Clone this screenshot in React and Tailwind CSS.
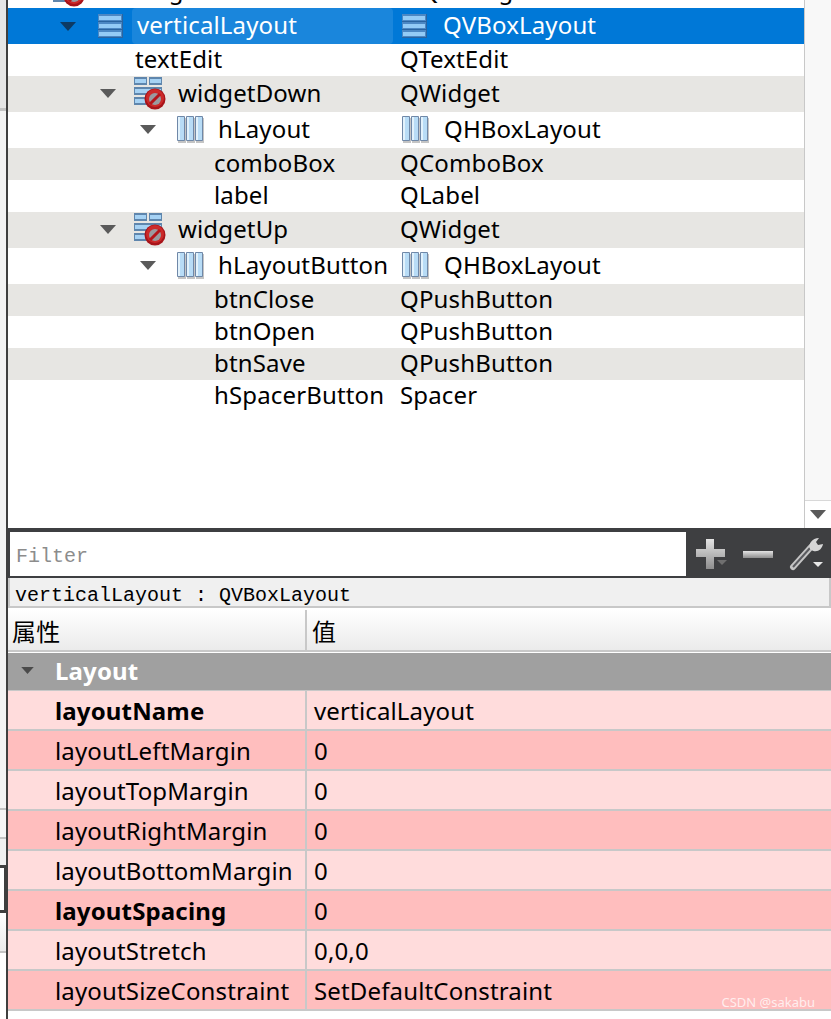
const font = { fontFamily: '"Noto Sans", sans-serif' }
const mono = { fontFamily: '"Liberation Mono", monospace' }

const VBoxIcon = () => (
    <svg width="26" height="26" viewBox="0 0 26 26" className="shrink-0">
        {[1, 9, 17].map((y) => (
            <g key={y}>
                <rect x="1" y={y} width="25" height="8" fill="#2a64a0" />
                <rect x="1" y={y} width="24" height="7" fill="#4c88c4" />
                <rect x="2" y={y + 2} width="22" height="4" fill="#93cbf6" />
            </g>
        ))}
    </svg>
)

const HBoxIcon = () => (
    <svg width="28" height="28" viewBox="0 0 28 28" className="shrink-0">
        {[1, 10, 19].map((x) => (
            <g key={x}>
                <rect x={x + 1} y="3" width="8" height="25" fill="#c4c4c4" />
                <rect x={x} y="1" width="8" height="25" rx="1" fill="#6f88a8" />
                <rect x={x + 1} y="2" width="6" height="23" fill="#b8dcf6" />
                <rect x={x + 1} y="2" width="2" height="23" fill="#e2f2fc" />
            </g>
        ))}
    </svg>
)

const WidgetIcon = () => (
    <svg width="34" height="34" viewBox="0 0 34 34" className="shrink-0">
        <rect x="1" y="1" width="13" height="8" fill="#5f86ad" />
        <rect x="2" y="3" width="11" height="4" fill="#a6d2f4" />
        <rect x="16" y="1" width="13" height="8" fill="#5f86ad" />
        <rect x="17" y="3" width="11" height="4" fill="#a6d2f4" />
        <rect x="1" y="11" width="28" height="8" fill="#5f86ad" />
        <rect x="2" y="13" width="26" height="4" fill="#a6d2f4" />
        <rect x="1" y="21" width="13" height="8" fill="#5f86ad" />
        <rect x="2" y="23" width="11" height="4" fill="#a6d2f4" />
        <circle cx="22" cy="23" r="10.5" fill="#a8141a" />
        <circle cx="22" cy="22" r="9" fill="#cc2a2a" />
        <circle cx="22" cy="23" r="6" fill="#9a9aa0" />
        <path d="M17 28L27 18" stroke="#b5141a" strokeWidth="3" />
    </svg>
)

const Arrow = ({ color = "#5a5a5a", w = 16, h = 9 }) => (
    <svg width={w} height={h} viewBox="0 0 16 9" className="shrink-0">
        <path d="M0 0H16L8 9Z" fill={color} />
    </svg>
)

const TreeRow = ({ tall, alt, name, cls, indent, arrow, icon, clsIcon, gap = "w-5", iconGap = "w-[14px]" }) => (
    <div className={`flex items-center pb-[2px] ${tall ? "h-9" : "h-8"} ${alt ? "bg-[#e7e6e3]" : "bg-white"}`}>
        <div className="flex items-center w-[385px] shrink-0 whitespace-nowrap">
            <div style={{ width: indent }} className="shrink-0" />
            {arrow && <Arrow />}
            {arrow && <div className={`${gap} shrink-0`} />}
            {icon}
            {icon && <div className={`${iconGap} shrink-0`} />}
            <span>{name}</span>
        </div>
        <div className={`flex items-center ${clsIcon ? "pl-[8px]" : "pl-[7px]"}`}>
            {clsIcon && <div className="mr-[15px] flex">{clsIcon}</div>}
            <span>{cls}</span>
        </div>
    </div>
)

const PropRow = ({ name, value, bold, dark }) => (
    <div className={`flex h-10 border-b-2 border-[#c8c8c8] ${dark ? "bg-[#ffbebe]" : "bg-[#ffdcdc]"}`}>
        <div className={`w-[299px] shrink-0 pl-[47px] border-r-2 border-[#c8c8c8] leading-[40px] whitespace-nowrap ${bold ? "font-bold" : ""}`}>{name}</div>
        <div className="pl-[7px] leading-[40px] whitespace-nowrap">{value}</div>
    </div>
)

const PlusIcon = () => (
    <svg width="32" height="32" viewBox="0 0 32 32">
        <defs>
            <linearGradient id="plusV" x1="0" y1="0" x2="0" y2="1">
                <stop offset="0" stopColor="#e4e4e4" />
                <stop offset="1" stopColor="#8e8e8e" />
            </linearGradient>
        </defs>
        <path d="M11 1H19V11H30V19H19V31H11V19H1V11H11Z" fill="url(#plusV)" />
        <path d="M22 22H32L27 27Z" fill="#6f6f6f" />
    </svg>
)

const WrenchIcon = () => (
    <svg width="36" height="36" viewBox="0 0 36 36">
        <path d="M4 31L22 11" stroke="#c4c4c4" strokeWidth="6" strokeLinecap="round" />
        <path d="M4 31L21 12" stroke="#5a5b5f" strokeWidth="2" />
        <path d="M21 13C19 8 23 2 30 2L27 6L29 9L34 8C33 14 27 18 21 13Z" fill="#d6d6d6" />
        <path d="M24 26H34L29 31Z" fill="#e8e8e8" />
    </svg>
)

const App = () => {
    return (
        <div className="relative flex w-[831px] h-[1019px] overflow-hidden bg-white text-[24px] leading-none tracking-[0.15px] text-black" style={font}>
            {/* what shows of the window behind */}
            <div className="flex flex-col w-[6px] shrink-0 bg-white">
                <div className="h-[108px] bg-[#e6e6e6] border-b-[3px] border-[#c4c4c4] box-content" />
                <div className="h-[697px] bg-[#f3f3f3]" />
                <div className="h-[2px] bg-[#c4c4c4]" />
                <div className="h-[27px] bg-[#f6f6f6]" />
                <div className="h-[2px] bg-[#c4c4c4]" />
                <div className="h-[26px] bg-[#f0f0f0]" />
                <div className="h-[48px] bg-white border-y-[3px] border-r-2 border-[#3f3f3f]" />
                <div className="h-[40px] bg-gradient-to-b from-white to-[#ebebeb] border-b-2 border-[#c4c4c4]" />
            </div>
            <div className="w-[2px] shrink-0 bg-[#3f3f3f]" />

            <div className="flex flex-col flex-1 min-w-0">
                {/* object tree */}
                <div className="flex h-[528px] shrink-0 overflow-hidden">
                    <div className="w-[796px] shrink-0">
                        <div className="h-2 overflow-hidden">
                            <div className="-mt-7 flex h-9 items-center whitespace-nowrap">
                                <div className="w-[44px] shrink-0" />
                                <WidgetIcon />
                                <div className="w-[10px] shrink-0" />
                                <span className="w-[307px] shrink-0 pl-[14px]">Dialog</span>
                                <span className="pl-[18px]">QDialog</span>
                            </div>
                        </div>

                        <div className="flex items-center h-9 bg-[#0078d7] text-white">
                            <div className="flex items-center w-[385px] h-full shrink-0">
                                <div className="w-[52px] shrink-0" />
                                <Arrow color="#0d3a63" />
                                <div className="w-[21px] shrink-0" />
                                <VBoxIcon />
                                <div className="flex items-center ml-[9px] pl-[5px] pb-[2px] flex-1 h-full bg-[#1a86dc] rounded-sm">verticalLayout</div>
                            </div>
                            <div className="flex items-center pl-[8px] h-full">
                                <div className="mr-[16px] flex"><VBoxIcon /></div>
                                <span className="pb-[2px]">QVBoxLayout</span>
                            </div>
                        </div>

                        <TreeRow name="textEdit" cls="QTextEdit" indent={127} />
                        <TreeRow tall alt name="widgetDown" cls="QWidget" indent={92} arrow gap="w-[17px]" iconGap="w-[11px]" icon={<WidgetIcon />} />
                        <TreeRow tall name="hLayout" cls="QHBoxLayout" indent={132} arrow icon={<HBoxIcon />} clsIcon={<HBoxIcon />} />
                        <TreeRow alt name="comboBox" cls="QComboBox" indent={206} />
                        <TreeRow name="label" cls="QLabel" indent={206} />
                        <TreeRow tall alt name="widgetUp" cls="QWidget" indent={92} arrow gap="w-[17px]" iconGap="w-[11px]" icon={<WidgetIcon />} />
                        <TreeRow tall name="hLayoutButton" cls="QHBoxLayout" indent={132} arrow icon={<HBoxIcon />} clsIcon={<HBoxIcon />} />
                        <TreeRow alt name="btnClose" cls="QPushButton" indent={206} />
                        <TreeRow name="btnOpen" cls="QPushButton" indent={206} />
                        <TreeRow alt name="btnSave" cls="QPushButton" indent={206} />
                        <TreeRow name="hSpacerButton" cls="Spacer" indent={206} />
                    </div>

                    {/* scrollbar */}
                    <div className="flex flex-col flex-1 justify-end border-l border-[#c8c8c8] bg-[#f8f8f8]">
                        <div className="flex h-7 items-center justify-center border-t border-[#d8d8d8] bg-white">
                            <Arrow color="#5a5a5a" />
                        </div>
                    </div>
                </div>

                {/* filter */}
                <div className="flex h-[50px] shrink-0 items-center bg-[#3e3f41] pt-[4px] pb-[2px]">
                    <div className="flex h-full w-[676px] ml-[2px] shrink-0 items-center bg-white pl-[6px] pt-[6px] text-[20px] tracking-normal text-[#8c8c8c]" style={mono}>Filter</div>
                    <div className="flex flex-1 items-center justify-between pl-[9px] pr-[6px]">
                        <PlusIcon />
                        <div className="h-[7px] w-[30px] bg-gradient-to-b from-[#e4e4e4] to-[#8e8e8e] mr-[1px]" />
                        <WrenchIcon />
                    </div>
                </div>

                {/* object label */}
                <div className="flex h-[30px] shrink-0 items-end bg-[#f0f0f0] border-x-2 border-b-2 border-[#c8c8c8] pl-[5px] text-[20px] tracking-normal" style={mono}>verticalLayout : QVBoxLayout</div>

                {/* property header */}
                <div className="flex h-[42px] shrink-0 border-b-2 border-[#c8c8c8] mt-[2px] bg-gradient-to-b from-white to-[#ebebeb]" style={{ fontFamily: '"Noto Sans CJK SC", sans-serif' }}>
                    <div className="w-[299px] shrink-0 pl-[4px] pt-[2px] border-r-2 border-[#c8c8c8] leading-[38px]">属性</div>
                    <div className="pl-[5px] pt-[2px] leading-[38px]">值</div>
                </div>

                <div className="flex items-center h-[38px] mt-px pb-[2px] shrink-0 bg-[#a0a0a0] border-b border-[#c8c8c8] font-bold text-white">
                    <div className="ml-[13px] mr-[21px]"><Arrow color="#4a4a4a" w={13} h={7} /></div>
                    Layout
                </div>

                {/* properties */}
                <PropRow bold name="layoutName" value="verticalLayout" />
                <PropRow dark name="layoutLeftMargin" value="0" />
                <PropRow name="layoutTopMargin" value="0" />
                <PropRow dark name="layoutRightMargin" value="0" />
                <PropRow name="layoutBottomMargin" value="0" />
                <PropRow dark bold name="layoutSpacing" value="0" />
                <PropRow name="layoutStretch" value="0,0,0" />
                <PropRow dark name="layoutSizeConstraint" value="SetDefaultConstraint" />
            </div>

            <div className="absolute right-[16px] top-[996px] text-[13px] tracking-normal text-white/75 leading-none">CSDN @sakabu</div>
        </div>
    )
}

export default App
